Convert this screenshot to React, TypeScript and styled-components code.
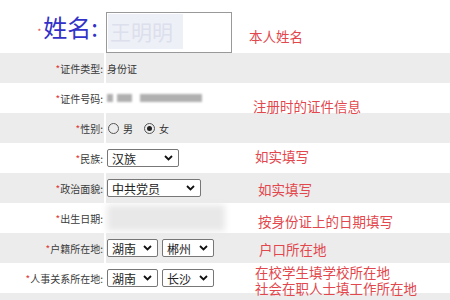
import React from "react";
import styled, { createGlobalStyle } from "styled-components";

const GlobalStyle = createGlobalStyle`
  body {
    margin: 0;
    background: #fff;
    font-family: "Noto Sans CJK SC", "Liberation Sans", sans-serif;
  }
`;

const Form = styled.div`
  width: 450px;
  height: 300px;
  overflow: hidden;
  background: #ececec;
`;

const Row = styled.div<{ $alt?: boolean; $h?: number }>`
  display: flex;
  align-items: stretch;
  height: ${({ $h }) => $h ?? 30}px;
  background: ${({ $alt }) => ($alt ? "#ececec" : "#fff")};
`;

const Label = styled.div`
  width: 103px;
  padding-right: 1px;
  border-right: 2px solid #fff;
  display: flex;
  align-items: center;
  justify-content: flex-end;
  font-size: 10px;
  color: #3a3a3a;
  white-space: nowrap;
`;

const Star = styled.span<{ $big?: boolean }>`
  color: #e03a3a;
  font-size: ${({ $big }) => ($big ? "8px" : "10px")};
  margin-right: ${({ $big }) => ($big ? "2px" : "0")};
  padding-top: ${({ $big }) => ($big ? "10px" : "0")};
`;

const Value = styled.div<{ $top?: boolean }>`
  width: 138px;
  padding-left: 1px;
  display: flex;
  align-items: ${({ $top }) => ($top ? "flex-start" : "center")};
  gap: 4px;
  font-size: 10px;
  color: #333;
`;

const NameLabel = styled.div`
  width: 98px;
  padding-right: 7px;
  display: flex;
  align-items: center;
  justify-content: flex-end;
  font-size: 24px;
  color: #3232c8;
`;

const NameInput = styled.div`
  margin-top: 12px;
  width: 122px;
  height: 37px;
  border: 1px solid #999;
  padding: 1px;
  box-sizing: content-box;
  display: flex;
`;

const Masked = styled.span`
  width: 73px;
  height: 35px;
  background: #eef0f7;
  color: #dcdfec;
  font-size: 21px;
  line-height: 35px;
  padding-left: 2px;
  white-space: nowrap;
  overflow: hidden;
`;

const Blur = styled.span<{ $w: number }>`
  display: inline-block;
  width: ${({ $w }) => $w}px;
  height: 8px;
  background: #b0b0b0;
  filter: blur(1.3px);
`;

const BlurPatch = styled.div`
  width: 118px;
  height: 26px;
  background: #e8e8e8;
  filter: blur(3px);
`;

const Radio = styled.span<{ $checked?: boolean }>`
  width: 9px;
  height: 9px;
  border: 1px solid #555;
  border-radius: 50%;
  margin-left: 1px;
  display: inline-flex;
  align-items: center;
  justify-content: center;
  &::after {
    content: "";
    width: 5px;
    height: 5px;
    border-radius: 50%;
    background: ${({ $checked }) => ($checked ? "#222" : "transparent")};
  }
`;

const RadioText = styled.span`
  margin-right: 6px;
`;

const Select = styled.div<{ $w: number }>`
  width: ${({ $w }) => $w}px;
  height: 18px;
  box-sizing: border-box;
  border: 1px solid #777;
  border-radius: 2px;
  background: #fff;
  display: flex;
  align-items: center;
  justify-content: space-between;
  padding: 0 5px 0 4px;
  font-size: 12px;
  color: #222;
`;

const Hint = styled.div<{ $top: number; $left: number }>`
  flex: 1;
  padding-top: ${({ $top }) => $top}px;
  padding-left: ${({ $left }) => $left}px;
  font-size: 13.5px;
  line-height: 16px;
  color: #e2474d;
  white-space: nowrap;
`;

const Chevron = () => (
  <svg width="9" height="6" viewBox="0 0 9 6">
    <path d="M1 1l3.5 3.5L8 1" fill="none" stroke="#111" strokeWidth="1.8" />
  </svg>
);

const Drop: React.FC<{ w: number; text: string }> = ({ w, text }) => (
  <Select $w={w}>
    <span>{text}</span>
    <Chevron />
  </Select>
);

const Field: React.FC<{ label: string }> = ({ label }) => (
  <Label>
    <Star>*</Star>
    {label}:
  </Label>
);

const App: React.FC = () => {
  return (
    <>
      <GlobalStyle />
      <Form>
        <Row $h={53}>
          <NameLabel>
            <Star $big>*</Star>姓名:
          </NameLabel>
          <Value $top>
            <NameInput>
              <Masked>王明明</Masked>
            </NameInput>
          </Value>
          <Hint $top={28} $left={5}>本人姓名</Hint>
        </Row>
        <Row $alt>
          <Field label="证件类型" />
          <Value>身份证</Value>
          <Hint $top={0} $left={0} />
        </Row>
        <Row>
          <Field label="证件号码" />
          <Value>
            <Blur $w={6} />
            <Blur $w={15} />
            <Blur $w={62} style={{ marginLeft: 4 }} />
          </Value>
          <Hint $top={15} $left={8}>注册时的证件信息</Hint>
        </Row>
        <Row $alt>
          <Field label="性别" />
          <Value>
            <Radio />
            <RadioText>男</RadioText>
            <Radio $checked />
            <RadioText>女</RadioText>
          </Value>
          <Hint $top={0} $left={0} />
        </Row>
        <Row>
          <Field label="民族" />
          <Value>
            <Drop w={72} text="汉族" />
          </Value>
          <Hint $top={5} $left={10}>如实填写</Hint>
        </Row>
        <Row $alt>
          <Field label="政治面貌" />
          <Value>
            <Drop w={94} text="中共党员" />
          </Value>
          <Hint $top={8} $left={13}>如实填写</Hint>
        </Row>
        <Row>
          <Field label="出生日期" />
          <Value>
            <BlurPatch />
          </Value>
          <Hint $top={10} $left={13}>按身份证上的日期填写</Hint>
        </Row>
        <Row $alt>
          <Field label="户籍所在地" />
          <Value>
            <Drop w={51} text="湖南" />
            <Drop w={52} text="郴州" />
          </Value>
          <Hint $top={8} $left={14}>户口所在地</Hint>
        </Row>
        <Row>
          <Field label="人事关系所在地" />
          <Value>
            <Drop w={51} text="湖南" />
            <Drop w={52} text="长沙" />
          </Value>
          <Hint $top={1} $left={10}>
            在校学生填学校所在地
            <br />
            社会在职人士填工作所在地
          </Hint>
        </Row>
      </Form>
    </>
  );
};

export default App;
